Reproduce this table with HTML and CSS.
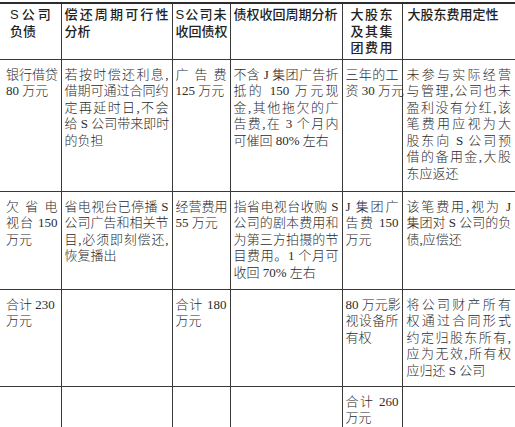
FILE: index.html
```html
<!DOCTYPE html>
<html lang="zh-CN">
<head>
<meta charset="utf-8">
<title>S公司债务分析</title>
<link rel="stylesheet" href="styles.css">
</head>
<body>
<table class="sheet">
  <colgroup>
    <col class="w1"><col class="w2"><col class="w3"><col class="w4"><col class="w5"><col class="w6">
  </colgroup>
  <thead>
    <tr class="r-head">
      <th class="h1"><span class="ln sp">S公司</span><span class="ln">负债</span></th>
      <th><span class="ln j">偿还周期可行性</span><span class="ln">分析</span></th>
      <th><span class="ln j">S公司未</span><span class="ln">收回债权</span></th>
      <th><span class="ln">债权收回周期分析</span></th>
      <th class="h5"><span class="ln">大股东</span><span class="ln">及其集</span><span class="ln">团费用</span></th>
      <th class="h6"><span class="ln">大股东费用定性</span></th>
    </tr>
  </thead>
  <tbody>
    <tr class="r1">
      <td><span class="ln">银行借贷</span><span class="ln">80 万元</span></td>
      <td><span class="ln j">若按时偿还利息,</span><span class="ln">借期可通过合同约</span><span class="ln j">定再延时日,不会</span><span class="ln j">给 S 公司带来即时</span><span class="ln">的负担</span></td>
      <td><span class="ln j">广告费</span><span class="ln">125 万元</span></td>
      <td><span class="ln j">不含 J 集团广告折</span><span class="ln j">抵的 150 万元现</span><span class="ln j">金,其他拖欠的广</span><span class="ln j">告费,在 3 个月内</span><span class="ln">可催回 80% 左右</span></td>
      <td><span class="ln j">三年的工</span><span class="ln">资 30 万元</span></td>
      <td class="c6"><span class="ln j">未参与实际经营</span><span class="ln j">与管理,公司也未</span><span class="ln j">盈利没有分红,该</span><span class="ln j">笔费用应视为大</span><span class="ln j">股东向 S 公司预</span><span class="ln j">借的备用金,大股</span><span class="ln">东应返还</span></td>
    </tr>
    <tr class="r2">
      <td><span class="ln j">欠省电</span><span class="ln j">视台 150</span><span class="ln">万元</span></td>
      <td><span class="ln j">省电视台已停播 S</span><span class="ln j">公司广告和相关节</span><span class="ln j">目,必须即刻偿还,</span><span class="ln">恢复播出</span></td>
      <td><span class="ln j">经营费用</span><span class="ln">55 万元</span></td>
      <td><span class="ln j">指省电视台收购 S</span><span class="ln j">公司的剧本费用和</span><span class="ln j">为第三方拍摄的节</span><span class="ln j">目费用。1 个月可</span><span class="ln">收回 70% 左右</span></td>
      <td><span class="ln j">J 集团广</span><span class="ln j">告费 150</span><span class="ln">万元</span></td>
      <td class="c6"><span class="ln j">该笔费用,视为 J</span><span class="ln">集团对 S 公司的负</span><span class="ln">债,应偿还</span></td>
    </tr>
    <tr class="r3">
      <td><span class="ln">合计 230</span><span class="ln">万元</span></td>
      <td></td>
      <td><span class="ln j">合计 180</span><span class="ln">万元</span></td>
      <td></td>
      <td><span class="ln">80 万元影</span><span class="ln j">视设备所</span><span class="ln">有权</span></td>
      <td class="c6"><span class="ln j">将公司财产所有</span><span class="ln j">权通过合同形式</span><span class="ln j">约定归股东所有,</span><span class="ln j">应为无效,所有权</span><span class="ln">应归还 S 公司</span></td>
    </tr>
    <tr class="r4">
      <td></td>
      <td></td>
      <td></td>
      <td></td>
      <td><span class="ln j">合计 260</span><span class="ln">万元</span></td>
      <td></td>
    </tr>
  </tbody>
</table>
</body>
</html>
```
FILE: styles.css
```css
html, body {
  margin: 0;
  padding: 0;
  background: #ffffff;
}

body {
  width: 515px;
  height: 427px;
  overflow: hidden;
  padding-top: 2px;
}

.sheet {
  width: 515px;
  table-layout: fixed;
  border-collapse: collapse;
  border-top: 2px solid #2c2c2c;
  border-bottom: 2px solid #2c2c2c;
  color: #2b2b2b;
  font-family: "Liberation Serif", "Noto Sans CJK SC", serif;
  font-size: 13px;
  font-weight: 300;
  line-height: 16.5px;
}

.w1 { width: 61px; }
.w2 { width: 111px; }
.w3 { width: 58px; }
.w4 { width: 112px; }
.w5 { width: 60px; }
.w6 { width: 113px; }

.sheet th,
.sheet td {
  vertical-align: top;
  text-align: left;
  padding: 7px 3px 0 3px;
  border-left: 1px solid #3a3a3a;
  border-top: 1px solid #3a3a3a;
}

.sheet th:first-child,
.sheet td:first-child {
  border-left: none;
  padding-left: 6px;
}

.sheet th {
  font-family: "Liberation Sans", "Noto Sans CJK SC", sans-serif;
  font-weight: 500;
  padding-top: 3px;
  color: #222222;
}

.sheet .c6 {
  padding-left: 4px;
  padding-right: 4px;
}

.h1 {
  padding-left: 10px !important;
}

.h5 {
  padding-left: 8px !important;
  letter-spacing: 1.5px;
}

.h6 {
  padding-left: 5px !important;
}

.ln {
  display: block;
  white-space: nowrap;
}

.ln.j {
  text-align: justify;
  text-align-last: justify;
  text-justify: inter-character;
}

.ln.sp {
  letter-spacing: 3px;
}

.r-head { height: 56px; }
.r1 { height: 132px; }
.r2 { height: 98px; }
.r3 { height: 97px; }
.r4 { height: 37px; }
```
